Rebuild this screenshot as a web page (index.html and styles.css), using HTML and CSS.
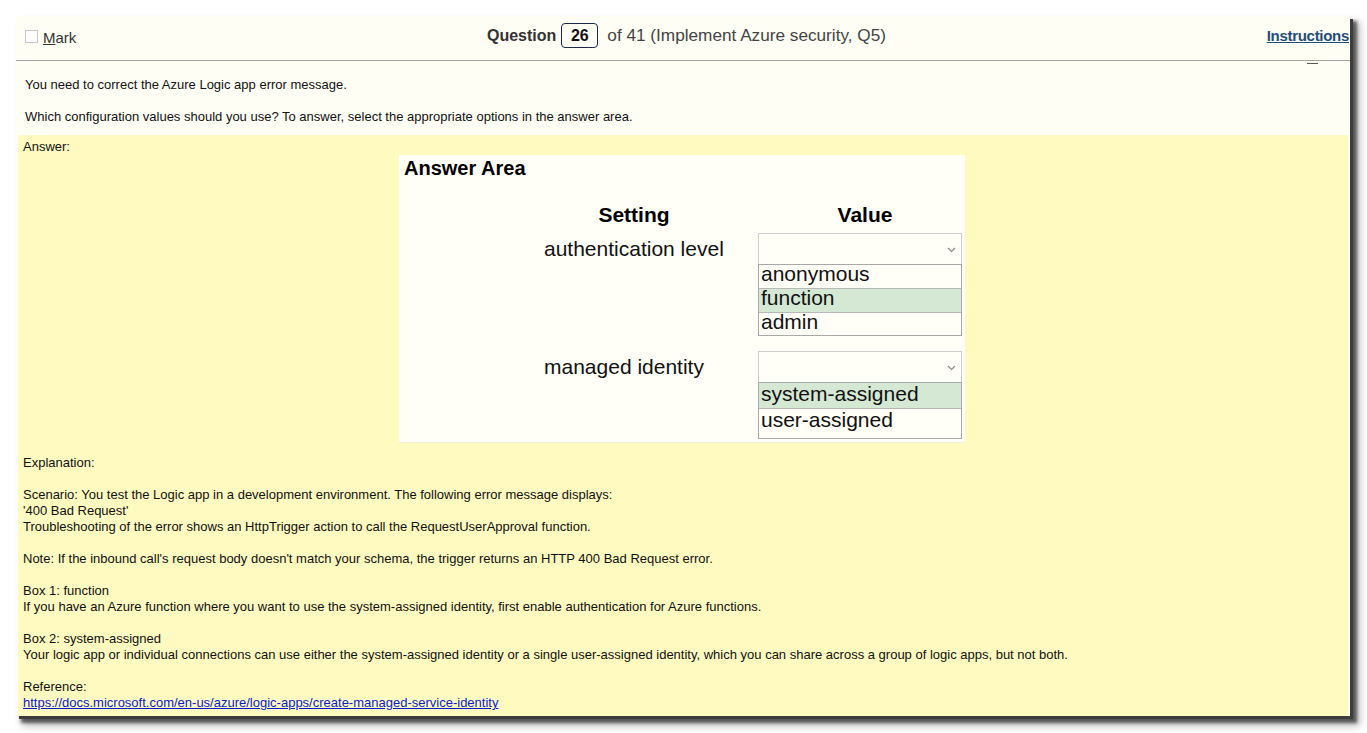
FILE: index.html
```html
<!DOCTYPE html>
<html>
<head>
<meta charset="utf-8">
<link rel="stylesheet" href="styles.css">
</head>
<body>
<div class="window">
  <header class="topbar">
    <div class="mark"><span class="checkbox"></span><span class="mark-text"><u>M</u>ark</span></div>
    <div class="qinfo"><span class="qlabel">Question</span><span class="qnum">26</span><span class="qof">of 41 (Implement Azure security, Q5)</span></div>
    <div class="instr"><a href="#">Instructions</a></div>
  </header>
  <div class="content">
    <span class="minbar"></span>
    <p class="q-line">You need to correct the Azure Logic app error message.</p>
    <p class="q-line">Which configuration values should you use? To answer, select the appropriate options in the answer area.</p>
    <div class="answer">
      <div class="answer-label">Answer:</div>
      <div class="aa">
        <div class="aa-title">Answer Area</div>
        <div class="aa-grid">
          <div class="aa-hdr">Setting</div>
          <div class="aa-hdr aa-hdr-val">Value</div>
          <div class="aa-label">authentication level</div>
          <div class="aa-sel">
            <div class="dd"><svg width="9" height="6" viewBox="0 0 9 6"><polyline points="1,1 4.5,4.5 8,1" fill="none" stroke="#8a8a8a" stroke-width="1.2"/></svg></div>
            <div class="opts">
              <div class="opt">anonymous</div>
              <div class="opt sel">function</div>
              <div class="opt">admin</div>
            </div>
          </div>
          <div class="aa-label">managed identity</div>
          <div class="aa-sel">
            <div class="dd"><svg width="9" height="6" viewBox="0 0 9 6"><polyline points="1,1 4.5,4.5 8,1" fill="none" stroke="#8a8a8a" stroke-width="1.2"/></svg></div>
            <div class="opts opts2">
              <div class="opt sel">system-assigned</div>
              <div class="opt">user-assigned</div>
            </div>
          </div>
        </div>
      </div>
      <div class="explain">
        <p>Explanation:</p>
        <p>Scenario: You test the Logic app in a development environment. The following error message displays:<br>'400 Bad Request'<br>Troubleshooting of the error shows an HttpTrigger action to call the RequestUserApproval function.</p>
        <p>Note: If the inbound call's request body doesn't match your schema, the trigger returns an HTTP 400 Bad Request error.</p>
        <p>Box 1: function<br>If you have an Azure function where you want to use the system-assigned identity, first enable authentication for Azure functions.</p>
        <p>Box 2: system-assigned<br>Your logic app or individual connections can use either the system-assigned identity or a single user-assigned identity, which you can share across a group of logic apps, but not both.</p>
        <p>Reference:<br><a href="#">https://docs.microsoft.com/en-us/azure/logic-apps/create-managed-service-identity</a></p>
      </div>
    </div>
  </div>
</div>
</body>
</html>
```

FILE: styles.css
```css
html, body {
  margin: 0;
  padding: 0;
  background: #ffffff;
  height: 733px;
  overflow: hidden;
}
body {
  padding: 16px 0 0 16px;
  box-sizing: border-box;
  font-family: "Liberation Sans", Arial, sans-serif;
}
.window {
  width: 1334px;
  height: 700px;
  background: #fffef5;
  box-shadow: 3px 3px 0 0 #3c3c3c, 6px 6px 3px 1px rgba(0,0,0,0.55), 8px 8px 8px 2px rgba(0,0,0,0.25);
  overflow: hidden;
  display: flex;
  flex-direction: column;
}
.topbar {
  height: 44px;
  border-bottom: 1px solid #a3a3a3;
  display: flex;
  align-items: center;
  position: relative;
  flex-shrink: 0;
}
.mark {
  display: flex;
  align-items: center;
  padding-left: 9px;
  width: 400px;
  color: #333;
  font-size: 15px;
  margin-top: -4px;
}
.checkbox {
  width: 11px;
  height: 11px;
  border: 1px solid #c8c8c8;
  background: #fff;
  margin-right: 5px;
  margin-top: 1px;
}
.mark-text { position: relative; top: 1px; }
.qinfo {
  position: absolute;
  left: 471px;
  top: 7px;
  display: flex;
  align-items: center;
  font-size: 16px;
  color: #3a3a3a;
}
.qlabel { font-weight: bold; color: #333; }
.qnum {
  display: inline-block;
  margin-left: 5px;
  width: 35px;
  height: 23px;
  line-height: 23px;
  text-align: center;
  border: 1px solid #1c2a4a;
  border-radius: 4px;
  font-weight: bold;
  color: #111;
  font-size: 16px;
}
.qof { margin-left: 9px; color: #444; font-size: 17.2px; }
.instr {
  margin-left: auto;
  margin-right: 1px;
  padding-bottom: 5px;
  font-size: 15px;
  font-weight: bold;
  letter-spacing: -0.3px;
  white-space: nowrap;
}
.instr a { color: #1f4e79; text-decoration: underline; }

.content {
  position: relative;
  flex: 1;
  display: flex;
  flex-direction: column;
  padding: 16px 2px 2px 2px;
}
.minbar {
  position: absolute;
  left: 1291px;
  top: 2px;
  width: 11px;
  height: 1px;
  background: #555;
}
.q-line {
  margin: 0 0 16px 7px;
  font-size: 13px;
  line-height: 16px;
  color: #111;
}
.q-line + .q-line { margin-bottom: 10px; }

.answer {
  flex: 1;
  background: #fffac0;
  padding: 4px 5px 0 5px;
  font-size: 13px;
  color: #111;
}
.answer-label { line-height: 16px; }

.aa {
  width: 566px;
  height: 288px;
  margin: 0 auto;
  background: #fffef7;
  box-sizing: border-box;
  border-bottom: 1px solid #f3f0d8;
  position: relative;
  left: -1px;
}
.aa-title {
  padding: 1px 0 0 5px;
  font-size: 20px;
  line-height: 24px;
  font-weight: bold;
  color: #000;
}
.aa-grid {
  display: grid;
  grid-template-columns: 182px 204px;
  column-gap: 33px;
  margin-left: 144px;
  margin-top: 23px;
  font-size: 21px;
  color: #111;
  align-items: start;
}
.aa-hdr {
  font-weight: bold;
  text-align: center;
  line-height: 24px;
  font-size: 21px;
  color: #000;
  margin-bottom: 6px;
}
.aa-hdr-val { padding-left: 10px; }
.aa-label {
  line-height: 31px;
  white-space: nowrap;
  padding-left: 1px;
}
.aa-sel { margin-bottom: 15px; }
.dd {
  border: 1px solid #cfcfcf;
  border-bottom: none;
  display: flex;
  align-items: center;
  justify-content: flex-end;
  padding-right: 5px;
  padding-top: 2px;
  box-sizing: border-box;
  height: 31px;
}
.opts {
  border: 1px solid #a9a9a9;
}
.opt {
  height: 23px;
  line-height: 17px;
  padding-left: 2px;
  border-bottom: 1px solid #b8b8b8;
  white-space: nowrap;
}
.opt:last-child { border-bottom: none; height: 22px; }
.opt.sel { background: #d5e8d4; }
.opts2 .opt { height: 25px; line-height: 22px; }
.opts2 .opt:last-child { height: 29px; }

.explain {
  margin-top: 12px;
  font-size: 13px;
  line-height: 16px;
}
.explain p { margin: 0 0 16px 0; }
.explain a { color: #0c1ccc; text-decoration: underline; }
```
